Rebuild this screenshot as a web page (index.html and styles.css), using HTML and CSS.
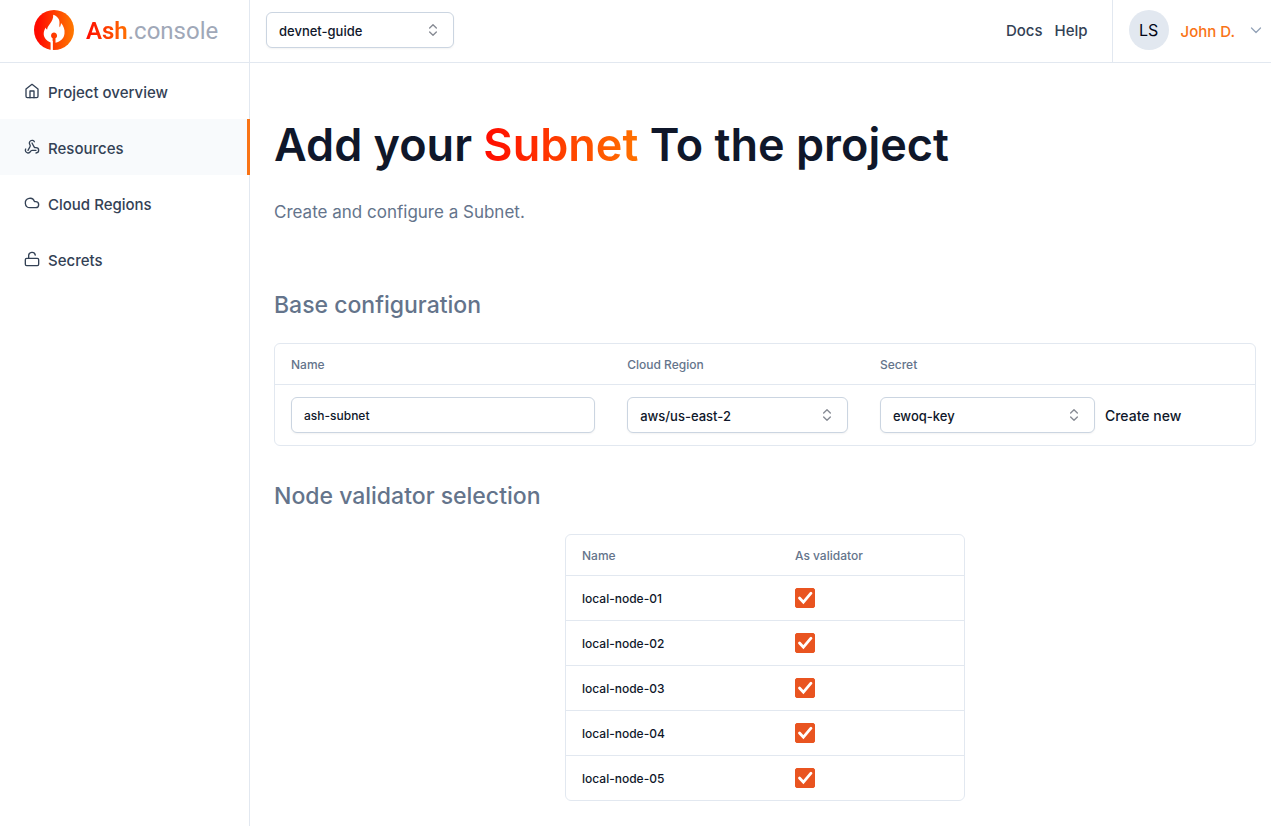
FILE: index.html
```html
<!DOCTYPE html>
<html lang="en">
<head>
<meta charset="utf-8">
<meta name="viewport" content="width=device-width, initial-scale=1">
<title>Ash.console</title>
<link rel="stylesheet" href="styles.css">
</head>
<body>
<svg class="sprite" aria-hidden="true">
  <symbol id="sort" viewBox="0 0 24 24"><path d="m7 15 5 5 5-5M7 9l5-5 5 5"/></symbol>
  <symbol id="check" viewBox="0 0 20 20"><path d="M4.500 10l3.900 4.200L16 5.200"/></symbol>
</svg>
<div class="app">
  <aside class="sidebar">
    <a class="brand" href="#">
      <svg class="brand-mark" viewBox="0 0 40 40" aria-hidden="true">
        <defs><linearGradient id="fire"><stop offset="0.1" stop-color="#ff0a00"/><stop offset="1" stop-color="#ff7a00"/></linearGradient></defs>
        <circle cx="20" cy="20" r="20" fill="url(#fire)"/>
        <path fill="#fff" d="M19.2 4.8C23.3 6 25.8 9.4 25.5 13c-.1 1.800-.3 3 .2 4.200.8-.7 1-2.200 1.300-4.200 2.600 3 4 6.500 3.500 10.500-.5 5-3.800 8-9 9.300V28.300c1.300-.7 1.700-1.900 1.500-3.100-.3-1.700-1.500-2.700-3-2.700s-2.700 1.100-2.900 2.700c-.1 1.300.4 2.400 1.500 3.100V40h-2V32.500C12.500 31 9.700 27.500 9.700 24c0-2.700 1-4.700 1.800-6.500.4.900.8 1.700 1.700 2C13 15.500 19.800 12 19.200 4.800z"/>
        <path fill="#fff" d="M17 31h1.700v8.900H17z"/>
      </svg>
      <span class="brand-name"><span class="fire-text">Ash</span>.console</span>
    </a>
    <nav class="menu">
      <a class="menu-item" href="#"><svg class="icon" viewBox="0 0 24 24" aria-hidden="true"><path d="m3 9 9-7 9 7v11a2 2 0 0 1-2 2H5a2 2 0 0 1-2-2z"/><path d="M9 22V12h6v10"/></svg>Project overview</a>
      <a class="menu-item active" href="#" aria-current="page"><svg class="icon" viewBox="0 0 24 24" aria-hidden="true"><path d="M18 16.98h-5.990c-1.100 0-1.950.94-2.480 1.900A4 4 0 0 1 2 17c.01-.7.200-1.400.57-2"/><path d="m6 17 3.130-5.780c.53-.97.1-2.180-.5-3.100a4 4 0 1 1 6.890-4.060"/><path d="m12 6 3.130 5.730C15.660 12.700 16.900 13 18 13a4 4 0 0 1 0 8"/></svg>Resources</a>
      <a class="menu-item" href="#"><svg class="icon" viewBox="0 0 24 24" aria-hidden="true"><path d="M17.500 19H9a7 7 0 1 1 6.710-9h1.790a4.500 4.500 0 1 1 0 9Z"/></svg>Cloud Regions</a>
      <a class="menu-item" href="#"><svg class="icon" viewBox="0 0 24 24" aria-hidden="true"><rect x="2" y="11" width="20" height="11" rx="2"/><path d="M7 11V7a5 5 0 0 1 9.900-1"/></svg>Secrets</a>
    </nav>
  </aside>
  <div class="body">
    <header class="topbar">
      <div class="select project-select">
        <select aria-label="Project"><option>devnet-guide</option></select>
        <svg class="sort-icon" aria-hidden="true"><use href="#sort"/></svg>
      </div>
      <nav class="links"><a href="#">Docs</a><a href="#">Help</a></nav>
      <button class="user" type="button">
        <span class="avatar">LS</span>
        <span class="user-name">John D.</span>
        <svg class="chevron" viewBox="0 0 16 16" aria-hidden="true"><path d="m3.500 6 4.500 4.500L12.500 6"/></svg>
      </button>
    </header>
    <main class="content">
      <h1>Add your <span class="fire-text">Subnet</span> To the project</h1>
      <p class="lead">Create and configure a Subnet.</p>
      <h2>Base configuration</h2>
      <div class="card">
        <table class="config">
          <colgroup><col class="col-name"><col class="col-region"><col></colgroup>
          <thead><tr><th><label for="name">Name</label></th><th><label for="region">Cloud Region</label></th><th><label for="secret">Secret</label></th></tr></thead>
          <tbody><tr>
            <td><input class="text-input" id="name" type="text" value="ash-subnet"></td>
            <td><div class="select"><select id="region"><option>aws/us-east-2</option></select><svg class="sort-icon" aria-hidden="true"><use href="#sort"/></svg></div></td>
            <td><div class="secret"><div class="select"><select id="secret"><option>ewoq-key</option></select><svg class="sort-icon" aria-hidden="true"><use href="#sort"/></svg></div><button class="create" type="button">Create new</button></div></td>
          </tr></tbody>
        </table>
      </div>
      <h2 class="second">Node validator selection</h2>
      <div class="card nodes-card">
        <table class="nodes">
          <colgroup><col class="col-node"><col></colgroup>
          <thead><tr><th>Name</th><th>As validator</th></tr></thead>
          <tbody>
            <tr><td><label for="n1">local-node-01</label></td><td><span class="check"><input id="n1" type="checkbox" checked><svg aria-hidden="true"><use href="#check"/></svg></span></td></tr>
            <tr><td><label for="n2">local-node-02</label></td><td><span class="check"><input id="n2" type="checkbox" checked><svg aria-hidden="true"><use href="#check"/></svg></span></td></tr>
            <tr><td><label for="n3">local-node-03</label></td><td><span class="check"><input id="n3" type="checkbox" checked><svg aria-hidden="true"><use href="#check"/></svg></span></td></tr>
            <tr><td><label for="n4">local-node-04</label></td><td><span class="check"><input id="n4" type="checkbox" checked><svg aria-hidden="true"><use href="#check"/></svg></span></td></tr>
            <tr><td><label for="n5">local-node-05</label></td><td><span class="check"><input id="n5" type="checkbox" checked><svg aria-hidden="true"><use href="#check"/></svg></span></td></tr>
          </tbody>
        </table>
      </div>
    </main>
  </div>
</div>
</body>
</html>
```
FILE: styles.css
```css
* { box-sizing: border-box; }
body {
  margin: 0;
  background: #fff;
  color: #0f172a;
  font: 14px/20px Inter, sans-serif;
}
a { color: inherit; text-decoration: none; }
button, input, select { font: inherit; color: inherit; margin: 0; }
button { border: 0; padding: 0; background: none; cursor: pointer; }
.sprite { position: absolute; width: 0; height: 0; }
.app {
  display: grid;
  grid-template-columns: 250px minmax(0, 1fr);
  min-height: 100vh;
}

/* Sidebar */
.sidebar { border-right: 1px solid #e2e8f0; }
.brand {
  display: flex;
  align-items: center;
  gap: 12px;
  height: 63px;
  padding: 0 24px 2px 34px;
  border-bottom: 1px solid #e2e8f0;
}
.brand-mark { width: 40px; height: 40px; }
.brand-name { padding-top: 2px; font: 400 24px/32px Roboto, sans-serif; color: #a0a8b8; }
.brand-name .fire-text { font-weight: 600; }
.fire-text {
  background: linear-gradient(90deg, #ff0a00, #ff7200);
  -webkit-background-clip: text;
  background-clip: text;
  color: transparent;
}
.menu-item {
  display: flex;
  align-items: center;
  gap: 8px;
  height: 56px;
  padding: 4px 24px 0;
  color: #334155;
  font-size: 15px;
  font-weight: 500;
}
.menu-item.active {
  margin-right: -1px;
  border-right: 3px solid #f97316;
  background: #f8fafc;
}
.icon { width: 16px; height: 16px; margin-bottom: 4px; }
.icon, .sort-icon, .chevron {
  flex: none;
  fill: none;
  stroke: currentColor;
  stroke-width: 2;
  stroke-linecap: round;
  stroke-linejoin: round;
}

/* Top bar */
.topbar {
  display: flex;
  align-items: center;
  height: 63px;
  padding-left: 16px;
  border-bottom: 1px solid #e2e8f0;
}
.project-select { width: 188px; margin-bottom: 2px; }
.links {
  display: flex;
  gap: 12px;
  margin-left: auto;
  padding-right: 24px;
  color: #334155;
  font-size: 15px;
  font-weight: 500;
}
.user {
  display: flex;
  align-items: center;
  height: 100%;
  padding: 0 7px 2px 16px;
  border-left: 1px solid #e2e8f0;
}
.avatar {
  width: 40px;
  height: 40px;
  margin-right: 12px;
  border-radius: 50%;
  background: #e2e8f0;
  color: #020617;
  font-size: 16px;
  line-height: 40px;
}
.user-name { padding-top: 4px; color: #f97316; font-size: 15px; font-weight: 500; }
.chevron { width: 16px; height: 16px; margin-left: 13px; stroke: #94a3b8; stroke-width: 1.3; }

/* Form controls */
.select { display: grid; align-items: center; }
.select > * { grid-area: 1 / 1; }
.select select, .text-input {
  appearance: none;
  width: 100%;
  height: 36px;
  padding: 2px 12px 0;
  border: 1px solid #cbd5e1;
  border-radius: 6px;
  background: #fff;
  box-shadow: 0 1px 2px rgb(0 0 0 / 5%);
}
.select select { font-size: 13px; font-weight: 500; }
.text-input { display: block; font-size: 12px; font-weight: 500; }
.sort-icon {
  justify-self: end;
  width: 16px;
  height: 16px;
  margin-right: 13px;
  opacity: .5;
  pointer-events: none;
}
.check { display: grid; width: 20px; height: 20px; }
.check > * { grid-area: 1 / 1; }
.check input {
  appearance: none;
  width: 20px;
  height: 20px;
  border: 1px solid #e95420;
  border-radius: 2px;
  background: #fff;
}
.check input:checked { background: #e95420; }
.check svg {
  width: 20px;
  height: 20px;
  fill: none;
  stroke: #fff;
  stroke-width: 2.8;
  stroke-linecap: round;
  pointer-events: none;
}

/* Page content */
.content { padding: 50px 15px 24px 24px; }
h1 { margin: 0; font-size: 45px; font-weight: 600; line-height: 64px; }
.lead { margin: 20px 0 0; color: #64748b; font-size: 17px; line-height: 30px; }
h2 {
  margin: 62px 0 22px;
  color: #64748b;
  font-size: 23px;
  font-weight: 500;
  line-height: 32px;
}
h2.second { margin: 34px 0 22px; }
.card { border: 1px solid #e2e8f0; border-radius: 6px; }
.nodes-card { width: 400px; max-width: 100%; margin: 0 auto; }
table { width: 100%; table-layout: fixed; border-collapse: collapse; font-size: 12px; font-weight: 500; }
th { height: 40px; padding: 2px 16px 0; color: #64748b; font-weight: 500; text-align: left; }
.nodes th { height: 41px; }
td { padding: 12px 16px; }
.nodes label { display: block; padding-top: 2px; line-height: 18px; }
tbody tr { border-top: 1px solid #e2e8f0; }
.col-name { width: 34.3%; }
.col-region { width: 25.8%; }
.col-node { width: 53.5%; }
.secret { display: flex; align-items: center; gap: 10px; }
.secret .select { width: 215px; }
.create { padding-top: 2px; font-size: 14px; font-weight: 500; }
```
